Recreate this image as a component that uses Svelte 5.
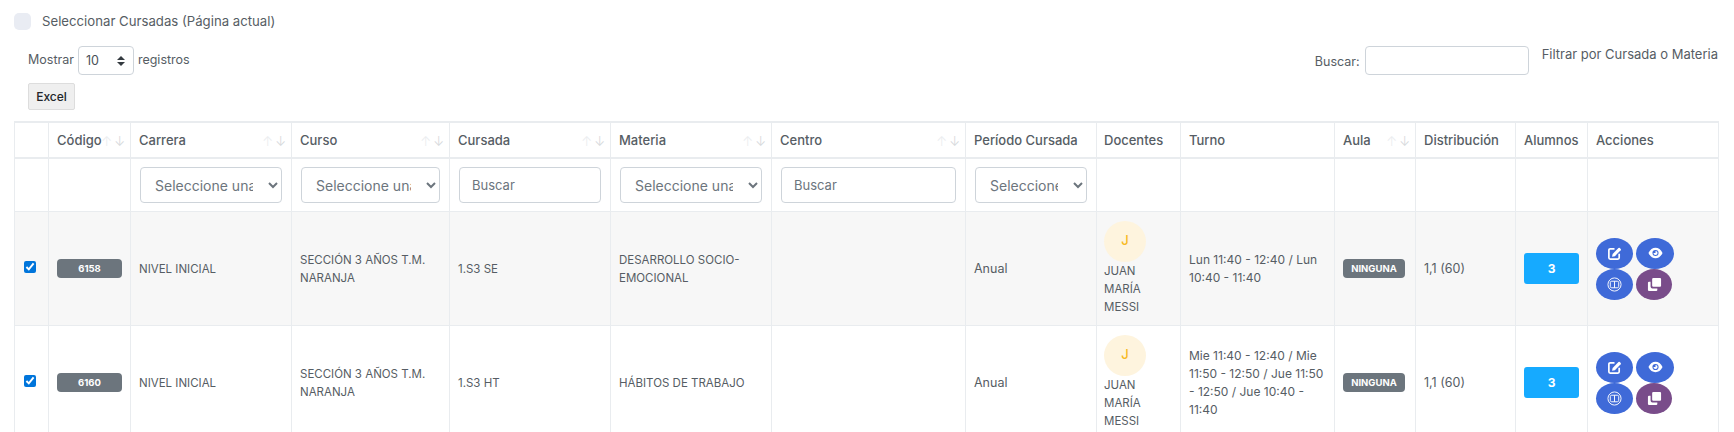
<script>
  const cols = [
    { name: "", cls: "c-check" },
    { name: "Código", cls: "c-codigo", sort: true },
    { name: "Carrera", cls: "c-carrera", sort: true },
    { name: "Curso", cls: "c-curso", sort: true },
    { name: "Cursada", cls: "c-cursada", sort: true },
    { name: "Materia", cls: "c-materia", sort: true },
    { name: "Centro", cls: "c-centro", sort: true },
    { name: "Período Cursada", cls: "c-periodo" },
    { name: "Docentes", cls: "c-docentes" },
    { name: "Turno", cls: "c-turno" },
    { name: "Aula", cls: "c-aula", sort: true },
    { name: "Distribución", cls: "c-dist" },
    { name: "Alumnos", cls: "c-alumnos" },
    { name: "Acciones", cls: "c-acciones" }
  ];

  const filters = [
    null,
    null,
    { type: "select", text: "Seleccione una opción" },
    { type: "select", text: "Seleccione una opción" },
    { type: "input" },
    { type: "select", text: "Seleccione una opción" },
    { type: "input" },
    { type: "select", text: "Seleccione una opción" },
    null,
    null,
    null,
    null,
    null,
    null
  ];

  const rows = [
    {
      codigo: "6158",
      materia: ["DESARROLLO SOCIO-", "EMOCIONAL"],
      cursada: "1.S3 SE",
      turno: ["Lun 11:40 - 12:40 / Lun", "10:40 - 11:40"]
    },
    {
      codigo: "6160",
      materia: ["HÁBITOS DE TRABAJO"],
      cursada: "1.S3 HT",
      turno: ["Mie 11:40 - 12:40 / Mie", "11:50 - 12:50 / Jue 11:50", "- 12:50 / Jue 10:40 -", "11:40"]
    }
  ];
</script>

<div class="page">
  <label class="select-all">
    <span class="fake-check"></span>
    <span>Seleccionar Cursadas (Página actual)</span>
  </label>

  <div class="controls">
    <div class="controls-left">
      <div class="length">
        <span class="raised">Mostrar</span>
        <span class="length-select">
          <select>
            <option>10</option>
            <option>25</option>
            <option>50</option>
          </select>
          <span class="updown"></span>
        </span>
        <span class="raised">registros</span>
      </div>
      <button class="excel">Excel</button>
    </div>
    <div class="controls-right">
      <label class="search">
        <span>Buscar:</span>
        <input type="text" />
      </label>
      <span class="hint">Filtrar por Cursada o Materia</span>
    </div>
  </div>

  <table>
    <colgroup>
      {#each cols as col}
        <col class={col.cls} />
      {/each}
    </colgroup>
    <thead>
      <tr class="head">
        {#each cols as col}
          <th>
            {col.name}
            {#if col.sort}
              <span class="sort"><i>↑</i><i>↓</i></span>
            {/if}
          </th>
        {/each}
      </tr>
      <tr class="filter">
        {#each filters as f}
          <td>
            {#if f && f.type === "select"}
              <select><option>{f.text}</option></select>
            {:else if f}
              <input type="text" placeholder="Buscar" />
            {/if}
          </td>
        {/each}
      </tr>
    </thead>
    <tbody>
      {#each rows as row}
        <tr>
          <td><input class="row-check" type="checkbox" checked /></td>
          <td><span class="badge code">{row.codigo}</span></td>
          <td class="upper">NIVEL INICIAL</td>
          <td class="upper">SECCIÓN 3 AÑOS T.M.<br />NARANJA</td>
          <td class="upper">{row.cursada}</td>
          <td class="upper">
            {#each row.materia as line}
              <div>{line}</div>
            {/each}
          </td>
          <td></td>
          <td class="lower">Anual</td>
          <td class="upper docente">
            <div class="avatar">J</div>
            <div>JUAN</div>
            <div>MARÍA</div>
            <div>MESSI</div>
          </td>
          <td>
            {#each row.turno as line}
              <div>{line}</div>
            {/each}
          </td>
          <td><span class="badge aula">NINGUNA</span></td>
          <td class="lower">1,1 (60)</td>
          <td><button class="alumnos">3</button></td>
          <td>
            <div class="acciones">
              <button class="act blue" aria-label="Editar">
                <svg viewBox="0 0 16 16" width="15" height="15">
                  <path d="M8 3H3.400A1.400 1.400 0 0 0 2 4.400v8.200A1.400 1.400 0 0 0 3.400 14h8.200a1.400 1.400 0 0 0 1.400-1.400V8.200" fill="none" stroke="#fff" stroke-width="1.800" />
                  <path d="M6 8.400 12.200 2.200a1.100 1.100 0 0 1 1.500 0l.9.900a1.100 1.100 0 0 1 0 1.500L8.400 10.800 5.400 11.400z" fill="#fff" />
                </svg>
              </button>
              <button class="act blue wide" aria-label="Ver">
                <svg viewBox="0 0 16 12" width="15" height="12">
                  <path d="M0.500 6C2.200 2.300 5 .5 8 .5s5.800 1.800 7.500 5.500C13.800 9.700 11 11.500 8 11.500S2.200 9.700.5 6z" fill="#fff" />
                  <circle cx="8" cy="6" r="3.300" fill="#3f6ad8" />
                  <path d="M8 3.800a2.200 2.200 0 1 1-2.200 2.200H8z" fill="#fff" />
                </svg>
              </button>
              <button class="act blue" aria-label="Aula">
                <svg viewBox="0 0 16 16" width="15" height="15" fill="none" stroke="#fff" stroke-width="1">
                  <circle cx="8" cy="8" r="7" />
                  <rect x="3.500" y="4.500" width="9" height="7" rx="1.500" />
                  <path d="M8 4.500v7" />
                </svg>
              </button>
              <button class="act purple" aria-label="Duplicar">
                <svg viewBox="0 0 16 16" width="15" height="15">
                  <rect x="5.500" y="1" width="9.500" height="9.500" rx="1.200" fill="#fff" />
                  <path d="M3.800 5H2.200A1.200 1.200 0 0 0 1 6.200v7.600A1.200 1.200 0 0 0 2.200 15h7.600a1.200 1.200 0 0 0 1.200-1.200v-1.600H5.800a2 2 0 0 1-2-2z" fill="#fff" />
                </svg>
              </button>
            </div>
          </td>
        </tr>
      {/each}
    </tbody>
  </table>
</div>

<style>
  :global(html), :global(body) {
    margin: 0;
    overflow: hidden;
    background: #fff;
  }

  .page {
    height: 432px;
    overflow: hidden;
    padding: 12px 16px 0 14px;
    box-sizing: border-box;
    font-family: Inter, "Open Sans", sans-serif;
    font-size: 12px;
    color: #495057;
  }

  .select-all {
    display: flex;
    align-items: center;
    gap: 11px;
    height: 18px;
    font-size: 13.200px;
    color: #565d64;
  }

  .fake-check {
    width: 17px;
    height: 17px;
    border-radius: 5px;
    background: #e9ecf3;
  }

  .controls {
    display: flex;
    justify-content: space-between;
    margin-top: 16px;
    padding-left: 14px;
    font-size: 12.500px;
    color: #565d64;
  }

  .length {
    display: flex;
    align-items: center;
    gap: 4px;
    height: 29px;
  }

  .raised {
    padding-bottom: 3px;
  }

  .length-select {
    position: relative;
    display: block;
  }

  .length-select select {
    display: block;
    appearance: none;
    width: 56px;
    height: 29px;
    padding: 0 0 0 7px;
    border: 1px solid #ced4da;
    border-radius: 4px;
    background: #fff;
    font: inherit;
    color: #495057;
  }

  .updown {
    position: absolute;
    right: 9px;
    top: 10px;
    width: 0;
    height: 0;
    border-left: 4px solid transparent;
    border-right: 4px solid transparent;
    border-bottom: 4px solid #343a40;
  }

  .updown::after {
    content: "";
    position: absolute;
    left: -4px;
    top: 6px;
    border-left: 4px solid transparent;
    border-right: 4px solid transparent;
    border-top: 4px solid #343a40;
  }

  .excel {
    display: block;
    margin-top: 8px;
    width: 47px;
    height: 27px;
    padding: 0;
    border: 1px solid #ddd;
    border-radius: 2px;
    background: #efefef;
    font: inherit;
    font-size: 12px;
    font-weight: 500;
    color: #212529;
  }

  .controls-right {
    display: flex;
    align-items: flex-start;
    gap: 13px;
  }

  .search {
    display: flex;
    align-items: center;
    gap: 5px;
  }

  .search span {
    padding-top: 2px;
  }

  .search input {
    width: 164px;
    height: 29px;
    padding: 0 8px;
    box-sizing: border-box;
    border: 1px solid #ced4da;
    border-radius: 4px;
  }

  .hint {
    margin-top: -1px;
    white-space: nowrap;
    line-height: 18px;
    font-size: 13px;
  }

  table {
    width: 1704px;
    margin-top: 11px;
    table-layout: fixed;
    border-collapse: collapse;
    border: 1px solid #e9ecef;
  }

  .c-check { width: 34px; }
  .c-codigo { width: 82px; }
  .c-carrera { width: 161px; }
  .c-curso { width: 158px; }
  .c-cursada { width: 161px; }
  .c-materia { width: 161px; }
  .c-centro { width: 194px; }
  .c-periodo { width: 131px; }
  .c-docentes { width: 84px; }
  .c-turno { width: 154px; }
  .c-aula { width: 81px; }
  .c-dist { width: 100px; }
  .c-alumnos { width: 72px; }
  .c-acciones { width: 131px; }

  th, td {
    padding: 0 8px;
    border: 1px solid #e9ecef;
    line-height: 18px;
    text-align: left;
    vertical-align: middle;
    white-space: nowrap;
    color: #565d64;
  }

  .head th {
    position: relative;
    height: 34px;
    font-size: 13px;
    font-weight: 500;
    border-top-width: 2px;
    border-bottom-width: 2px;
  }

  .head th:nth-child(9) {
    padding-left: 7px;
  }

  .sort {
    position: absolute;
    right: 5px;
    top: 9px;
    display: flex;
    gap: 2px;
    font-size: 13px;
    font-weight: 300;
  }

  .sort i {
    font-style: normal;
    color: #ebedef;
  }

  .sort i:last-child {
    color: #d6d9dc;
  }

  .filter td {
    height: 52px;
    padding: 0 9px;
  }

  .filter select,
  .filter input {
    display: block;
    width: 100%;
    height: 36px;
    box-sizing: border-box;
    border: 1px solid #ced4da;
    border-radius: 4px;
    background: #fff;
    font-family: inherit;
    color: #6c757d;
  }

  .filter select {
    padding: 0 12px 0 10px;
    font-size: 14px;
  }

  .filter input {
    padding: 0 12px;
    font-size: 13px;
  }

  .filter input::placeholder {
    color: #6c757d;
  }

  tbody td {
    height: 114px;
    box-sizing: border-box;
  }

  tbody tr:nth-child(odd) td {
    background: #f7f7f7;
  }

  .upper {
    font-size: 11.500px;
  }

  .lower {
    font-size: 12.500px;
  }

  .docente {
    padding-left: 7px;
  }

  .row-check {
    display: block;
    width: 12px;
    height: 12px;
    margin: 0 0 4px 1px;
    accent-color: #0075db;
  }

  .badge {
    display: inline-block;
    height: 19px;
    line-height: 19px;
    border-radius: 4px;
    background: #6c757d;
    color: #fff;
    font-size: 9.500px;
    font-weight: 700;
    text-align: center;
  }

  .code {
    width: 65px;
  }

  .aula {
    width: 62px;
  }

  .avatar {
    width: 42px;
    height: 41px;
    border-radius: 50%;
    background: #fef4de;
    color: #f7b924;
    font-weight: 500;
    font-size: 13px;
    line-height: 39px;
    text-align: center;
  }

  .alumnos {
    display: block;
    width: 55px;
    height: 31px;
    padding: 0;
    border: 0;
    border-radius: 3px;
    background: #16aaff;
    color: #fff;
    font: inherit;
    font-weight: 700;
  }

  .acciones {
    display: grid;
    grid-template-columns: 37px 38px;
    column-gap: 3px;
    justify-items: start;
  }

  .act {
    display: flex;
    align-items: center;
    justify-content: center;
    width: 37px;
    height: 31px;
    padding: 0;
    border: 0;
    border-radius: 50%;
  }

  .blue {
    background: #3f6ad8;
  }

  .purple {
    width: 36px;
    background: #794c8a;
  }

  .wide {
    width: 38px;
  }
</style>
